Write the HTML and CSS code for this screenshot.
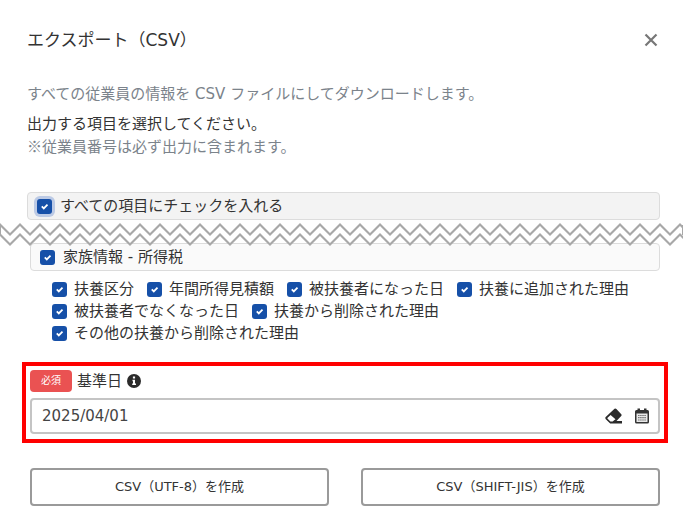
FILE: index.html
```html
<!DOCTYPE html>
<html lang="ja">
<head>
<meta charset="utf-8">
<title>エクスポート（CSV）</title>
<link rel="stylesheet" href="styles.css">
</head>
<body>
<main class="dialog">
  <header class="dialog-header">
    <h1 class="title">エクスポート（CSV）</h1>
    <button class="close" type="button" aria-label="閉じる">
      <svg width="14" height="14" viewBox="0 0 14 14"><path d="M1.500 1.500l11 11M12.500 1.500l-11 11" fill="none" stroke="#777" stroke-width="2.200"/></svg>
    </button>
  </header>

  <section class="intro">
    <p class="muted lead">すべての従業員の情報を CSV ファイルにしてダウンロードします。</p>
    <p>出力する項目を選択してください。</p>
    <p class="muted note">※従業員番号は必ず出力に含まれます。</p>
  </section>

  <label class="panel panel-all"><input class="check check-focus" type="checkbox" checked>すべての項目にチェックを入れる</label>

  <svg class="tear" width="100%" height="25" aria-hidden="true">
    <defs>
      <pattern id="zigzag" width="20" height="25" patternUnits="userSpaceOnUse">
        <path d="M-10 11L0 1L10 11L20 1L30 11V21L20 11L10 21L0 11L-10 21Z" fill="#fff"/>
        <path d="M-10 11.500L0 1.500L10 11.500L20 1.500L30 11.500M-10 21.500L0 11.500L10 21.500L20 11.500L30 21.500" fill="none" stroke="#a8a8a8" stroke-width="2"/>
      </pattern>
    </defs>
    <rect width="100%" height="25" fill="url(#zigzag)"/>
    <path d="M.5 2v10" stroke="#a8a8a8"/>
    <line x1="100%" x2="100%" y1="2" y2="12" stroke="#a8a8a8" stroke-width="2"/>
  </svg>

  <section class="group">
    <label class="panel"><input class="check" type="checkbox" checked>家族情報 - 所得税</label>
    <div class="options">
      <label class="option"><input class="check" type="checkbox" checked>扶養区分</label>
      <label class="option"><input class="check" type="checkbox" checked>年間所得見積額</label>
      <label class="option"><input class="check" type="checkbox" checked>被扶養者になった日</label>
      <label class="option"><input class="check" type="checkbox" checked>扶養に追加された理由</label>
      <label class="option"><input class="check" type="checkbox" checked>被扶養者でなくなった日</label>
      <label class="option"><input class="check" type="checkbox" checked>扶養から削除された理由</label>
      <label class="option"><input class="check" type="checkbox" checked>その他の扶養から削除された理由</label>
    </div>
  </section>

  <section class="highlight">
    <div class="field-head">
      <span class="badge">必須</span>
      <label for="base-date">基準日</label>
      <svg class="info" width="14" height="14" viewBox="0 0 14 14"><circle cx="7" cy="7" r="7" fill="#2b2b2b"/><path d="M5.500 5.800H8V9.600H9V11H5.200V9.600H6V7.200H5.500ZM5.900 2.400H8.100V4.600H5.900Z" fill="#fff"/></svg>
    </div>
    <div class="date-box">
      <input class="date" id="base-date" type="text" value="2025/04/01">
      <button class="icon" type="button" aria-label="消去">
        <svg width="18" height="16" viewBox="0 0 18 16"><path d="M.7 9L9.500.8Q10.500 0 11.400.9L16.300 6.200Q17 7.100 16.200 8L11.500 13H17V15.400H5.200L.8 11.200Q-.2 10 .7 9ZM5.600 6.900L2.600 9.800Q2.200 10.300 2.600 10.700L5.400 13.500H7.600L10.500 11.200Z" fill="#2b2b2b" fill-rule="evenodd"/></svg>
      </button>
      <button class="icon" type="button" aria-label="カレンダー">
        <svg width="14" height="16" viewBox="0 0 14 16"><path d="M2.500.5H5V2H9V.5H11.500V2H12.500Q14 2 14 3.500V14Q14 15.500 12.500 15.500H1.500Q0 15.500 0 14V3.500Q0 2 1.500 2H2.500Z" fill="#333"/><path d="M1.500 5.500H12.500V14H1.500Z" fill="#e8e8e8"/><path d="M3 7.500H11M3 9.700H11M3 12H11" stroke="#777" stroke-width="1.200" stroke-dasharray="1.600 .5"/></svg>
      </button>
    </div>
  </section>

  <footer class="actions">
    <button class="action" type="button">CSV（UTF-8）を作成</button>
    <button class="action" type="button">CSV（SHIFT-JIS）を作成</button>
  </footer>
</main>
</body>
</html>
```
FILE: styles.css
```css
* {
  box-sizing: border-box;
}

body {
  margin: 0;
  background: #fff;
  color: #333;
  font: 15px/22px "DejaVu Sans", "Noto Sans CJK JP", sans-serif;
}

button,
input {
  margin: 0;
  color: inherit;
  font: inherit;
}

p,
h1 {
  margin: 0;
}

.dialog {
  padding: 28px 0 22px;
}

.dialog-header {
  display: flex;
  align-items: center;
  justify-content: space-between;
  padding: 0 25px 0 27px;
}

.title {
  font-size: 17px;
  font-weight: 400;
  line-height: 24px;
}

.close,
.icon {
  display: flex;
  padding: 0;
  border: 0;
  background: none;
}

.intro {
  padding: 31px 23px 0 27px;
}

.muted {
  color: #7b838b;
}

.lead {
  margin-bottom: 8px;
}

.note {
  font-family: "Noto Sans CJK JP", sans-serif;
}

.panel {
  display: flex;
  align-items: center;
  gap: 8px;
  height: 28px;
  padding: 0 9px;
  border: 1px solid #dcdcdc;
  border-radius: 4px;
  background: #fafafa;
}

.panel-all {
  margin: 35px 23px 0 27px;
  background: #f3f3f3;
}

.check {
  flex: none;
  width: 15px;
  height: 15px;
  border-radius: 3px;
  appearance: none;
  background: #1650a8 url("data:image/svg+xml,%3Csvg xmlns='http://www.w3.org/2000/svg' viewBox='0 0 15 15'%3E%3Cpath d='M4.800 7.400l2 2 3.700-3.700' fill='none' stroke='white' stroke-width='1.800'/%3E%3C/svg%3E") center / 15px no-repeat;
}

.check-focus {
  box-shadow: 0 0 0 3px #bccae5;
}

.tear {
  position: relative;
  display: block;
  margin-top: 3px;
}

.group {
  margin: -5px 23px 0 30px;
}

.options {
  display: flex;
  flex-wrap: wrap;
  column-gap: 13px;
  padding: 7px 0 0 22px;
}

.option {
  display: flex;
  align-items: center;
  gap: 7px;
}

.highlight {
  margin: 18px 15px 0 22px;
  padding: 4px 4px 5px;
  border: 4px solid #f00;
}

.field-head {
  display: flex;
  align-items: center;
  gap: 5px;
  padding-bottom: 6px;
}

.badge {
  padding: 0 11px;
  border-radius: 4px;
  background: #ea5252;
  color: #fff;
  font-size: 10px;
}

.date-box {
  display: flex;
  align-items: center;
  gap: 12px;
  height: 36px;
  padding: 0 9px 0 10px;
  border: 2px solid #c4c4c4;
  border-radius: 4px;
}

.date {
  flex: 1;
  min-width: 0;
  padding: 0;
  border: 0;
  background: none;
  color: #444;
}

.actions {
  display: flex;
  gap: 32px;
  margin: 25px 23px 0 30px;
}

.action {
  flex: 1;
  height: 38px;
  padding: 0;
  border: 2px solid #9a9a9a;
  border-radius: 4px;
  background: #fff;
  font-size: 13px;
}
```
